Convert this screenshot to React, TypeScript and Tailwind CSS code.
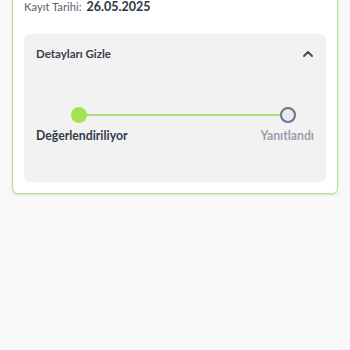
export default function App() {
  return (
    <div className="min-h-screen bg-[#f8f8f8] overflow-hidden" style={{ fontFamily: 'Lato, "Noto Sans", sans-serif' }}>
      <div className="mx-3 -mt-4 rounded-b-md border border-[#b3e38a] bg-white px-[11px] pb-[11px] pt-[14px] shadow-sm">
        <div className="flex items-baseline gap-[5px] leading-4">
          <span className="text-[11.25px] text-[#5b6270]">Kayıt Tarihi:</span>
          <span className="text-[12.5px] font-bold text-[#2d3340]">26.05.2025</span>
        </div>

        <div className="mt-[19px] rounded-md bg-[#f2f2f3]">
          <div className="flex h-10 items-center justify-between px-3">
            <span className="text-[11.5px] font-bold text-[#3a404c]">Detayları Gizle</span>
            <svg width="10" height="6" viewBox="0 0 10 6" fill="none" className="mr-[1px]">
              <polyline points="1,5 5,1 9,5" stroke="#3f4552" strokeWidth="1.8" strokeLinecap="round" strokeLinejoin="round" />
            </svg>
          </div>

          <div className="px-3 pb-[38px] pt-[33px]">
            <div className="flex items-center pl-[35px] pr-[18px]">
              <div className="h-4 w-4 rounded-full bg-[#a3e250]" />
              <div className="h-[2px] flex-1 bg-[#a9dd72]" />
              <div className="h-4 w-4 rounded-full border-2 border-[#6c7382] bg-[#e6ecf5]" />
            </div>
            <div className="mt-[5px] flex justify-between leading-4">
              <span className="text-[12.25px] font-bold text-[#343b48]">Değerlendiriliyor</span>
              <span className="text-[12.25px] font-bold text-[#9aa0ab]">Yanıtlandı</span>
            </div>
          </div>
        </div>
      </div>
    </div>
  )
}
